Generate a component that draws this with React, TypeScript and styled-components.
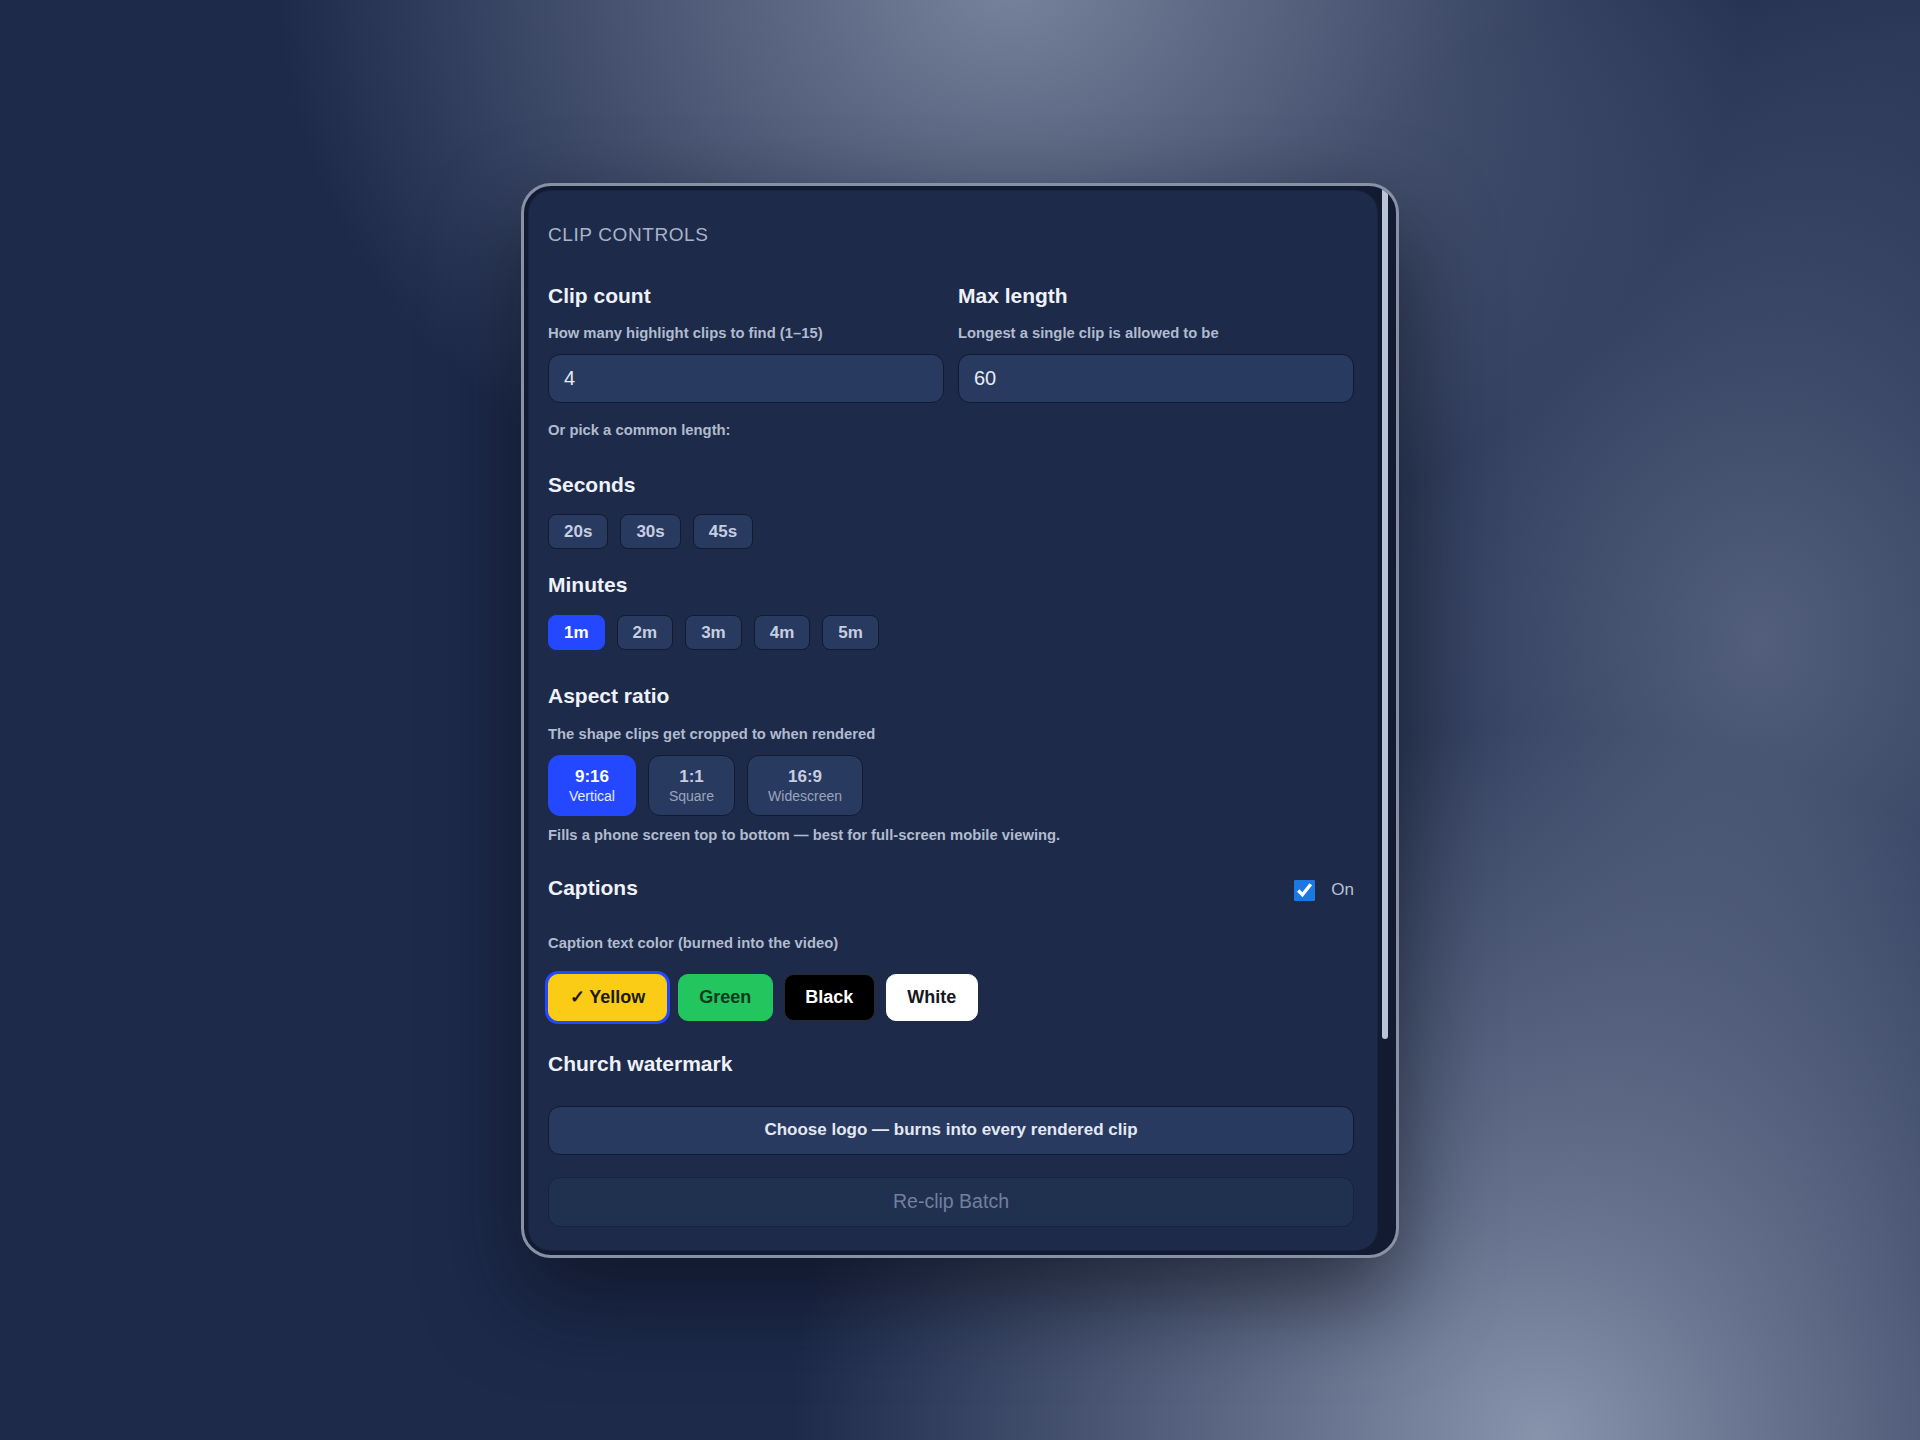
import React, { useState } from "react";
import styled, { createGlobalStyle } from "styled-components";

const GlobalStyle = createGlobalStyle`
  html, body {
    margin: 0;
    padding: 0;
  }
  body {
    font-family: "Liberation Sans", Arial, sans-serif;
    background: #1d2a4a;
  }
  * {
    box-sizing: border-box;
  }
`;

const Page = styled.div`
  height: 1440px;
  display: flex;
  align-items: center;
  justify-content: center;
  background:
    radial-gradient(ellipse 980px 800px at 1010px -20px, rgba(124, 135, 160, 0.95), rgba(124, 135, 160, 0) 75%),
    radial-gradient(ellipse 1000px 950px at 1540px 1440px, rgba(138, 149, 174, 0.98), rgba(138, 149, 174, 0) 75%),
    radial-gradient(ellipse 760px 900px at 1760px 640px, rgba(100, 112, 140, 0.75), rgba(100, 112, 140, 0) 75%),
    radial-gradient(ellipse 600px 500px at 1920px 40px, rgba(48, 60, 92, 0.7), rgba(48, 60, 92, 0) 75%),
    #1d2a4a;
`;

const Frame = styled.div`
  position: relative;
  display: flex;
  width: 878px;
  height: 1075px;
  border: 3px solid #8891a5;
  border-radius: 30px;
  background: #121b31;
  overflow: hidden;
  box-shadow: 0 40px 90px rgba(8, 12, 24, 0.6);

  /* the rounded panel sits under the scrolling content */
  &::before {
    content: "";
    position: absolute;
    top: 4px;
    left: 4px;
    bottom: 4px;
    right: 18px;
    border-radius: 22px;
    border: 1px solid #18233f;
    background: #1d2a4a;
  }
`;

const Scroller = styled.div`
  position: relative;
  flex: 1;
  min-width: 0;
  overflow-y: auto;
  scrollbar-width: none;
`;

const Rail = styled.div`
  position: relative;
  flex: none;
  width: 17px;
  padding: 2px 8px 0 3px;
`;

const Thumb = styled.div`
  width: 6px;
  border-radius: 3px;
  background: #b9c4d8;
`;

const Content = styled.div`
  display: flex;
  flex-direction: column;
  padding: 38px 25px 290px 24px;
`;

const Eyebrow = styled.div`
  font-size: 19px;
  line-height: 1.2;
  letter-spacing: 0.6px;
  text-transform: uppercase;
  color: #a9b3c7;
`;

const FieldGrid = styled.div`
  display: grid;
  grid-template-columns: 1fr 1fr;
  column-gap: 14px;
  margin-top: 37px;
`;

const Field = styled.div`
  display: flex;
  flex-direction: column;
`;

const Heading = styled.div<{ $top?: number }>`
  margin-top: ${p => p.$top ?? 0}px;
  font-size: 21px;
  font-weight: 700;
  line-height: 1.2;
  color: #eef1f7;
`;

const Hint = styled.div<{ $top?: number }>`
  margin-top: ${p => p.$top ?? 0}px;
  font-size: 14.8px;
  font-weight: 700;
  line-height: 1.2;
  color: #b1bbce;
`;

const Input = styled.input`
  width: 100%;
  height: 49px;
  margin-top: 11px;
  padding: 0 15px;
  border: 1.5px solid #111a30;
  border-radius: 12px;
  background: #283a60;
  color: #e6eaf3;
  font-family: inherit;
  font-size: 20px;
  outline: none;
`;

const PillRow = styled.div<{ $top?: number }>`
  display: flex;
  gap: 12px;
  margin-top: ${p => p.$top ?? 0}px;
`;

const Pill = styled.button<{ $active?: boolean }>`
  height: 35px;
  padding: 0 15px;
  border: 1.5px solid ${p => (p.$active ? "#2448ff" : "#111a30")};
  border-radius: 8px;
  background: ${p => (p.$active ? "#2448ff" : "#283a60")};
  color: ${p => (p.$active ? "#ffffff" : "#c6cee0")};
  font-family: inherit;
  font-size: 17px;
  font-weight: 700;
  cursor: pointer;
`;

const RatioButton = styled.button<{ $active?: boolean }>`
  display: flex;
  flex-direction: column;
  align-items: center;
  justify-content: center;
  height: 61px;
  padding: 0 20px;
  border: 1.5px solid ${p => (p.$active ? "#2448ff" : "#111a30")};
  border-radius: 12px;
  background: ${p => (p.$active ? "#2448ff" : "#283a60")};
  font-family: inherit;
  cursor: pointer;
`;

const RatioMain = styled.span<{ $active?: boolean }>`
  font-size: 17px;
  font-weight: 700;
  line-height: 1.2;
  color: ${p => (p.$active ? "#ffffff" : "#c6cee0")};
`;

const RatioSub = styled.span<{ $active?: boolean }>`
  font-size: 14px;
  line-height: 1.2;
  color: ${p => (p.$active ? "#e6ebff" : "#9aa5bc")};
`;

const CaptionRow = styled.div`
  display: flex;
  align-items: flex-start;
  justify-content: space-between;
  margin-top: 30px;
`;

const Toggle = styled.label`
  display: flex;
  align-items: center;
  gap: 16px;
  padding-top: 5px;
  font-size: 17px;
  line-height: 1.2;
  color: #b8c1d3;
  cursor: pointer;
`;

const Checkbox = styled.input`
  width: 21px;
  height: 21px;
  margin: 0;
  accent-color: #1b78e2;
`;

const ColorRow = styled.div`
  display: flex;
  gap: 11px;
  margin-top: 21px;
`;

const ColorChip = styled.button<{ $bg: string; $fg: string; $edge: string; $selected?: boolean }>`
  height: 47px;
  padding: 0 20.5px;
  border: 1.5px solid ${p => p.$edge};
  border-radius: 10px;
  background: ${p => p.$bg};
  color: ${p => p.$fg};
  font-family: inherit;
  font-size: 18px;
  font-weight: 700;
  box-shadow: ${p => (p.$selected ? "0 0 0 3px #2447ff" : "none")};
  cursor: pointer;
`;

const WideButton = styled.button<{ $muted?: boolean; $top: number }>`
  width: 100%;
  height: ${p => (p.$muted ? 50 : 49)}px;
  margin-top: ${p => p.$top}px;
  border: 1.5px solid ${p => (p.$muted ? "#18233f" : "#111a30")};
  border-radius: 12px;
  background: ${p => (p.$muted ? "#20304f" : "#283a60")};
  color: ${p => (p.$muted ? "#72809e" : "#e3e8f2")};
  font-family: inherit;
  font-size: ${p => (p.$muted ? 19.5 : 17)}px;
  font-weight: ${p => (p.$muted ? 400 : 700)};
  cursor: ${p => (p.$muted ? "default" : "pointer")};
`;

const seconds = ["20s", "30s", "45s"];
const minutes = ["1m", "2m", "3m", "4m", "5m"];
const ratios = [
  { id: "9:16", name: "Vertical" },
  { id: "1:1", name: "Square" },
  { id: "16:9", name: "Widescreen" },
];
const colors = [
  { name: "Yellow", bg: "#facc15", fg: "#1c1a10", edge: "#facc15" },
  { name: "Green", bg: "#22c55e", fg: "#0f3a1e", edge: "#22c55e" },
  { name: "Black", bg: "#000000", fg: "#ffffff", edge: "#2a2a2a" },
  { name: "White", bg: "#ffffff", fg: "#16181d", edge: "#ffffff" },
];

// visible share of the scrolling panel, used for the scrollbar thumb
const THUMB_HEIGHT = 851;

export default function App() {
  const [length, setLength] = useState("1m");
  const [ratio, setRatio] = useState("9:16");
  const [color, setColor] = useState("Yellow");
  const [captions, setCaptions] = useState(true);

  return (
    <Page>
      <GlobalStyle />
      <Frame>
        <Scroller>
          <Content>
            <Eyebrow>Clip controls</Eyebrow>

            <FieldGrid>
              <Field>
                <Heading>Clip count</Heading>
                <Hint $top={17}>How many highlight clips to find (1–15)</Hint>
                <Input defaultValue="4" />
              </Field>
              <Field>
                <Heading>Max length</Heading>
                <Hint $top={17}>Longest a single clip is allowed to be</Hint>
                <Input defaultValue="60" />
              </Field>
            </FieldGrid>

            <Hint $top={19}>Or pick a common length:</Hint>

            <Heading $top={32}>Seconds</Heading>
            <PillRow $top={17}>
              {seconds.map(s => (
                <Pill key={s} $active={length === s} onClick={() => setLength(s)}>
                  {s}
                </Pill>
              ))}
            </PillRow>

            <Heading $top={23}>Minutes</Heading>
            <PillRow $top={18}>
              {minutes.map(m => (
                <Pill key={m} $active={length === m} onClick={() => setLength(m)}>
                  {m}
                </Pill>
              ))}
            </PillRow>

            <Heading $top={33}>Aspect ratio</Heading>
            <Hint $top={17}>The shape clips get cropped to when rendered</Hint>
            <PillRow $top={12}>
              {ratios.map(r => (
                <RatioButton key={r.id} $active={ratio === r.id} onClick={() => setRatio(r.id)}>
                  <RatioMain $active={ratio === r.id}>{r.id}</RatioMain>
                  <RatioSub $active={ratio === r.id}>{r.name}</RatioSub>
                </RatioButton>
              ))}
            </PillRow>
            <Hint $top={11}>Fills a phone screen top to bottom — best for full-screen mobile viewing.</Hint>

            <CaptionRow>
              <Heading>Captions</Heading>
              <Toggle>
                <Checkbox type="checkbox" checked={captions} onChange={e => setCaptions(e.target.checked)} />
                On
              </Toggle>
            </CaptionRow>

            <Hint $top={34}>Caption text color (burned into the video)</Hint>
            <ColorRow>
              {colors.map(c => (
                <ColorChip
                  key={c.name}
                  $bg={c.bg}
                  $fg={c.fg}
                  $edge={c.edge}
                  $selected={color === c.name}
                  onClick={() => setColor(c.name)}
                >
                  {color === c.name ? `✓ ${c.name}` : c.name}
                </ColorChip>
              ))}
            </ColorRow>

            <Heading $top={30}>Church watermark</Heading>
            <WideButton $top={30}>Choose logo — burns into every rendered clip</WideButton>
            <WideButton $top={22} $muted disabled>
              Re-clip Batch
            </WideButton>
          </Content>
        </Scroller>
        <Rail>
          <Thumb style={{ height: THUMB_HEIGHT }} />
        </Rail>
      </Frame>
    </Page>
  );
}
